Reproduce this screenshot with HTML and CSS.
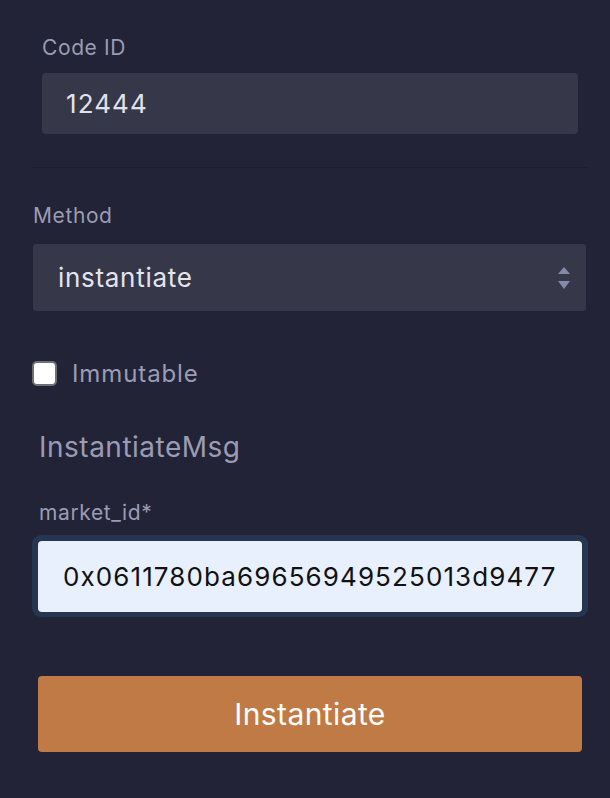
FILE: index.html
```html
<!DOCTYPE html>
<html lang="en">
<head>
<meta charset="utf-8">
<title>Instantiate</title>
<link rel="stylesheet" href="styles.css">
</head>
<body>
<main class="form">
  <section class="code-block">
    <label class="label">Code ID</label>
    <input class="field dark" type="text" value="12444">
  </section>
  <hr class="divider">
  <section class="method-block">
    <label class="label">Method</label>
    <div class="select">
      <span class="select-value">instantiate</span>
      <svg class="select-arrows" width="12" height="23" viewBox="0 0 12 23"><path d="M6 0 L12 7 L0 7 Z" fill="#848aa9"/><path d="M0 14 L12 14 L6 22 Z" fill="#848aa9"/></svg>
    </div>
  </section>
  <label class="check-row">
    <input class="check" type="checkbox">
    <span class="check-label">Immutable</span>
  </label>
  <section class="msg-block">
    <h2 class="msg-title">InstantiateMsg</h2>
    <label class="label msg-label">market_id*</label>
    <div class="focus-ring">
      <input class="field light" type="text" value="0x0611780ba69656949525013d9477">
    </div>
    <button class="submit" type="button">Instantiate</button>
  </section>
</main>
</body>
</html>
```

FILE: styles.css
```css
* { box-sizing: border-box; }
html, body {
  margin: 0;
  padding: 0;
  background: #222336;
  font-family: Inter, "Noto Sans", sans-serif;
}
.form {
  display: flex;
  flex-direction: column;
  padding-top: 36px;
  height: 798px;
}
.label {
  display: block;
  font-size: 21px;
  line-height: 24px;
  letter-spacing: 0.6px;
  color: #9b9cb4;
}
.code-block {
  display: flex;
  flex-direction: column;
  gap: 13px;
  margin: 0 32px 0 42px;
}
.field {
  display: block;
  width: 100%;
  border: none;
  outline: none;
  font-family: inherit;
  font-size: 26px;
  letter-spacing: 1.1px;
  border-radius: 4px;
  margin: 0;
}
.field.dark {
  height: 61px;
  background: #363749;
  color: #e2e2ec;
  padding: 0 0 0 24px;
}
.divider {
  margin: 33px 22px 0 32px;
  border: none;
  height: 1px;
  background: #1b1c2c;
}
.method-block {
  display: flex;
  flex-direction: column;
  gap: 16px;
  margin: 36px 24px 0 33px;
}
.select {
  height: 67px;
  background: #363749;
  border-radius: 3px;
  display: flex;
  align-items: center;
  justify-content: space-between;
  padding: 0 16px 0 25px;
}
.select-value {
  font-size: 26px;
  letter-spacing: 0.7px;
  color: #e4e4ee;
}
.select-arrows { display: block; margin-top: 2px; }
.check-row {
  display: flex;
  align-items: center;
  gap: 15px;
  margin: 50px 0 0 32px;
  height: 25px;
}
.check {
  appearance: none;
  -webkit-appearance: none;
  margin: 0;
  width: 25px;
  height: 25px;
  background: #ffffff;
  border: 2px solid #6f6f74;
  border-radius: 5px;
}
.check-label {
  font-size: 24px;
  letter-spacing: 0.9px;
  color: #9b9cb4;
  line-height: 25px;
}
.msg-block {
  display: flex;
  flex-direction: column;
  margin: 44px 22px 0 32px;
}
.msg-title {
  margin: 0 0 0 7px;
  font-weight: 400;
  font-size: 28px;
  line-height: 34px;
  letter-spacing: 0.5px;
  color: #9b9cb4;
}
.msg-label {
  margin: 37px 0 10px 7px;
}
.focus-ring {
  background: #263651;
  border-radius: 9px;
  padding: 6px 6px 5px 6px;
}
.field.light {
  height: 71px;
  background: #e8f0fe;
  color: #111111;
  padding: 0 0 0 25px;
  border-radius: 4px;
}
.submit {
  margin: 59px 6px 0 6px;
  height: 76px;
  border: none;
  border-radius: 4px;
  background: #bf7a46;
  color: #ffffff;
  font-family: inherit;
  font-size: 30px;
  letter-spacing: 0.4px;
}
```
